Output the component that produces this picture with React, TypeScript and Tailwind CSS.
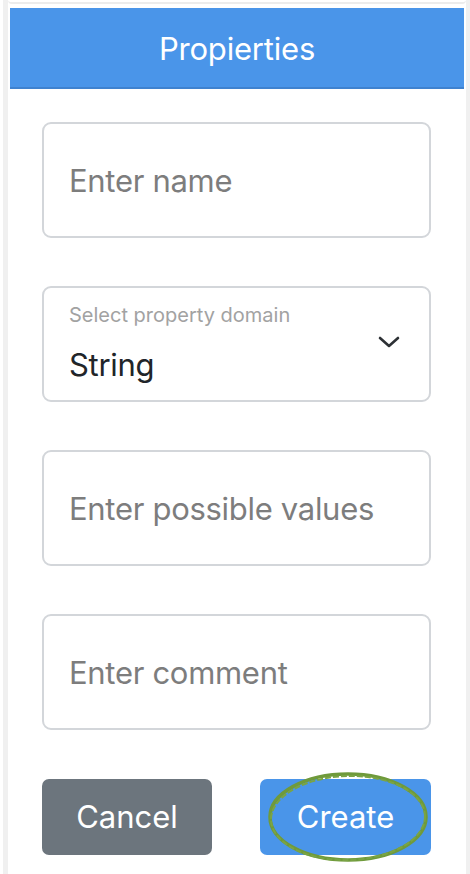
import { useState } from "react";

const Field: React.FC<{ placeholder: string }> = ({ placeholder }) => (
  <input
    className="block w-full h-[116px] rounded-[9px] border-2 border-[#d3d6da] bg-white px-[25px] text-[31px] tracking-[-0.3px] text-[#212529] placeholder:text-[#7d7d7d] outline-none"
    placeholder={placeholder}
  />
);

const Chevron = () => (
  <svg width="24" height="14" viewBox="0 0 24 14" fill="none">
    <path d="M3 3 L12 11 L21 3" stroke="#2d3135" strokeWidth="2.6" strokeLinecap="round" strokeLinejoin="round" />
  </svg>
);

const App = () => {
  const [domain] = useState("String");
  return (
    <div className="w-[470px] h-[874px] overflow-hidden bg-white pl-[3px]" style={{ fontFamily: "Inter, 'Liberation Sans', sans-serif" }}>
      <div className="h-full border-l-[5px] border-r-[4px] border-[#f0f0f0] flex flex-col">
        <div className="h-[4px] rounded-b-[6px] border-b-2 border-[#ececec]" />
        <div className="mt-[4px] mx-[2px] h-[81px] bg-[#4a95e9] border-b-2 border-[#3f82cf] flex items-center justify-center">
          <h1 className="text-white text-[31px] tracking-[-0.2px] mt-[3px]">Propierties</h1>
        </div>
        <div className="pl-[34px] pr-[35px] pt-[33px] flex flex-col gap-[48px]">
          <Field placeholder="Enter name" />
          <div className="relative h-[116px] rounded-[9px] border-2 border-[#d3d6da] bg-white px-[25px] flex flex-col justify-center">
            <span className="text-[20px] text-[#a2a2a2] leading-none mt-[-3px]">Select property domain</span>
            <span className="text-[31px] tracking-[-0.3px] text-[#212529] leading-none mt-[24px]">{domain}</span>
            <div className="absolute right-[28px] top-[47px]">
              <Chevron />
            </div>
          </div>
          <Field placeholder="Enter possible values" />
          <Field placeholder="Enter comment" />
          <div className="flex justify-between mt-[1px]">
            <button className="w-[170px] h-[76px] rounded-[7px] bg-[#6c757d] text-white text-[31px]">Cancel</button>
            <div className="relative">
              <button className="w-[171px] h-[76px] rounded-[7px] bg-[#4a95e9] text-white text-[31px]">Create</button>
              <svg className="absolute left-[8px] top-[-10px] pointer-events-none" width="166" height="96" viewBox="0 0 166 96" fill="none">
                <ellipse cx="80" cy="48" rx="78" ry="43" stroke="#6f9a3b" strokeWidth="3.5" />
                <ellipse cx="80" cy="49" rx="77" ry="42" stroke="#7aa444" strokeWidth="2" strokeDasharray="6 2" transform="rotate(-1.5 80 49)" />
              </svg>
            </div>
          </div>
        </div>
      </div>
    </div>
  );
};

export default App;
